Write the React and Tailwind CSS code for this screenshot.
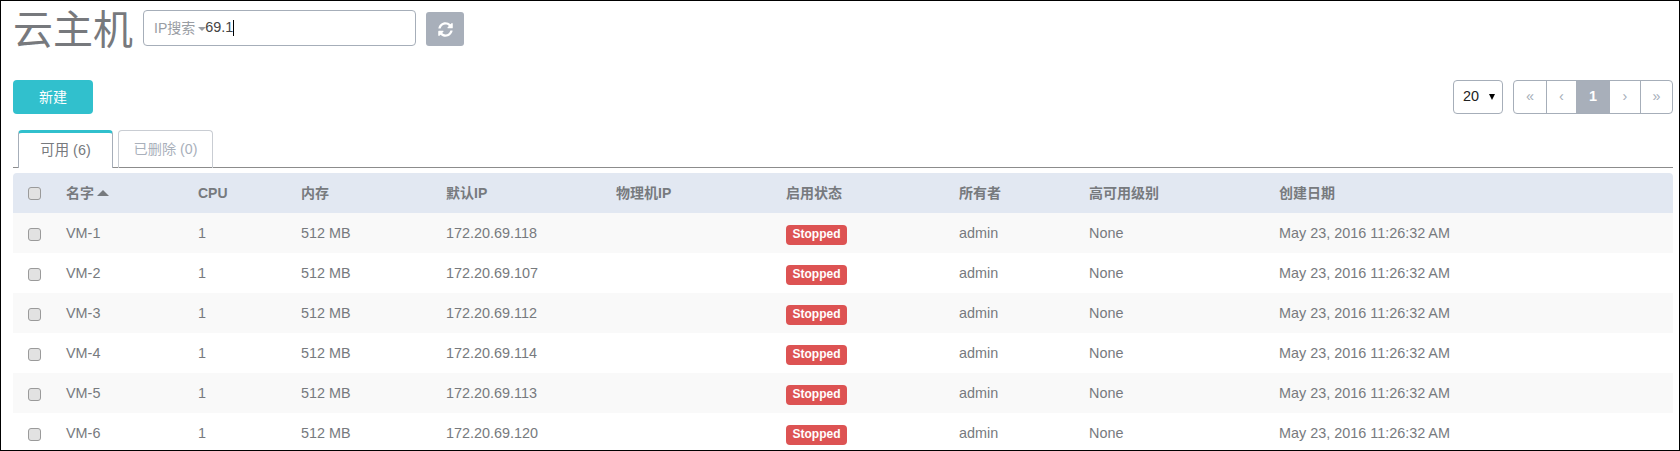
import React from 'react';
import { FaSyncAlt } from 'react-icons/fa';

const font = "font-['Liberation_Sans','Noto_Sans_CJK_SC',sans-serif]";

const vms = [
    { name: 'VM-1', ip: '172.20.69.118' },
    { name: 'VM-2', ip: '172.20.69.107' },
    { name: 'VM-3', ip: '172.20.69.112' },
    { name: 'VM-4', ip: '172.20.69.114' },
    { name: 'VM-5', ip: '172.20.69.113' },
    { name: 'VM-6', ip: '172.20.69.120' },
];

const Check = () => (
    <span className="block w-[13px] h-[13px] ml-[15px] mt-[1px] rounded-[3px] border border-[#9a9a9a] bg-[#e2e2e2]" />
);

const columns = ['CPU', '内存', '默认IP', '物理机IP', '启用状态', '所有者', '高可用级别', '创建日期'];

const App = () => {
    return (
        <div className={`${font} w-[1680px] h-[451px] overflow-hidden border border-black bg-white text-[14.4px] text-[#777a7e] pl-[12px] pr-[6px]`}>
            {/* Title and search */}
            <div className="flex items-start h-[79px]">
                <h1 className="text-[40px] leading-[50px] w-[130px] mt-[4px] font-normal text-[#77797d]">云主机</h1>
                <div className="flex items-center w-[273px] h-[36px] mt-[9px] border border-[#a6aeb9] rounded-[4px] pl-[10px] text-[14px]">
                    <span className="text-[#999da3]">IP搜索</span>
                    <span className="ml-[3px] mt-[2px] border-x-[4px] border-t-[4px] border-x-transparent border-t-[#999da3]" />
                    <span className="text-[#444444] -ml-[1px] text-[14.4px]">69.1</span>
                    <span className="w-px h-[16px] bg-black" />
                </div>
                <button className="flex items-center justify-center w-[38px] h-[34px] mt-[11px] ml-[10px] rounded-[3px] bg-[#a8afba] text-white text-[15px]">
                    <FaSyncAlt />
                </button>
            </div>

            {/* Toolbar */}
            <div className="flex items-start justify-between h-[50px]">
                <button className="w-[80px] h-[34px] rounded-[4px] bg-[#31c0cd] text-white text-[14px]">新建</button>
                <div className="flex">
                    <div className="flex items-center w-[50px] h-[34px] border border-[#a6aeb9] rounded-[4px] pl-[9px] text-[14.4px] text-[#222222]">
                        20
                        <span className="ml-[10px] border-x-[3.5px] border-t-[6px] border-x-transparent border-t-black" />
                    </div>
                    <div className="flex h-[34px] ml-[10px] border border-[#a6aeb9] rounded-[4px] overflow-hidden text-[#a6aeb9]">
                        <span className="w-[32px] flex items-center justify-center">«</span>
                        <span className="w-[30px] flex items-center justify-center border-l border-[#a6aeb9]">‹</span>
                        <span className="w-[34px] flex items-center justify-center bg-[#a8afba] text-white font-bold">1</span>
                        <span className="w-[30px] flex items-center justify-center">›</span>
                        <span className="w-[32px] flex items-center justify-center border-l border-[#a6aeb9]">»</span>
                    </div>
                </div>
            </div>

            {/* Tabs */}
            <div className="flex h-[38px] pl-[5px] gap-[5px] border-b border-[#8c8c8c]">
                <div className="w-[95px] h-[38px] flex items-center justify-center bg-white border-x border-[#a6aeb9] border-t-[3px] border-t-[#31c0cd] rounded-t-[4px] text-[#777a7e]">
                    可用 (6)
                </div>
                <div className="w-[95px] h-[38px] flex items-center justify-center border-x border-t border-[#c9cdd3] rounded-t-[4px] text-[#a9b0bb] text-[14.2px]">
                    已删除 (0)
                </div>
            </div>

            {/* Table */}
            <table className="mt-[5px] w-[1660px] table-fixed border-collapse">
                <colgroup>
                    <col className="w-[53px]" />
                    <col className="w-[132px]" />
                    <col className="w-[103px]" />
                    <col className="w-[145px]" />
                    <col className="w-[170px]" />
                    <col className="w-[170px]" />
                    <col className="w-[173px]" />
                    <col className="w-[130px]" />
                    <col className="w-[190px]" />
                    <col />
                </colgroup>
                <thead>
                    <tr className="h-[40px] bg-[#e2e8f2] text-left text-[14px]">
                        <th className="rounded-tl-[4px]"><Check /></th>
                        <th className="font-bold">
                            名字
                            <span className="inline-block ml-[3px] mb-[2px] border-x-[6px] border-b-[6px] border-x-transparent border-b-[#777a7e]" />
                        </th>
                        {columns.map((col) => (
                            <th key={col} className="font-bold last:rounded-tr-[4px]">{col}</th>
                        ))}
                    </tr>
                </thead>
                <tbody>
                    {vms.map((vm) => (
                        <tr key={vm.name} className="h-[40px] odd:bg-[#f9f9f9]">
                            <td className="pt-[2px]"><Check /></td>
                            <td className="pt-[2px]">{vm.name}</td>
                            <td className="pt-[2px]">1</td>
                            <td className="pt-[2px]">512 MB</td>
                            <td className="pt-[2px]">{vm.ip}</td>
                            <td></td>
                            <td className="pt-[2px]">
                                <span className="inline-block mt-[2px] w-[61px] h-[20px] rounded-[4px] bg-[#dd5353] text-white text-[12px] leading-[19px] font-bold text-center align-middle">Stopped</span>
                            </td>
                            <td className="pt-[2px]">admin</td>
                            <td className="pt-[2px]">None</td>
                            <td className="pt-[2px]">May 23, 2016 11:26:32 AM</td>
                        </tr>
                    ))}
                </tbody>
            </table>
        </div>
    );
};

export default App;
